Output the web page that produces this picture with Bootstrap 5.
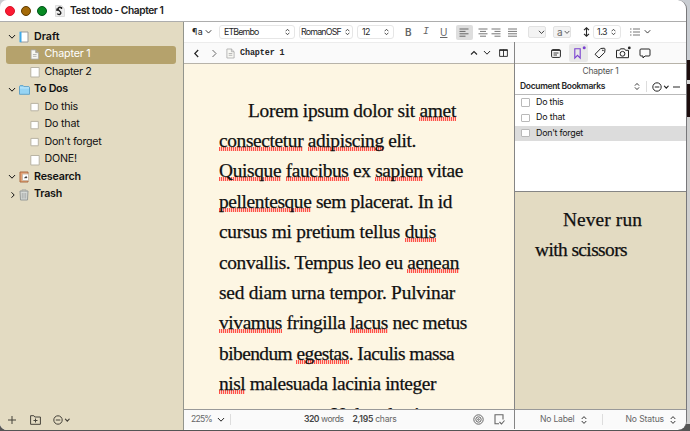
<!DOCTYPE html>
<html lang="en">
<head>
    <meta charset="UTF-8">
    <meta name="viewport" content="width=device-width, initial-scale=1.0">
    <title>Test todo - Chapter 1</title>
    <!-- Bootstrap CSS -->
    <link href="https://cdn.jsdelivr.net/npm/bootstrap@5.3.2/dist/css/bootstrap.min.css" rel="stylesheet">
    <style>
        body {
            width: 690px;
            height: 431px;
            background: linear-gradient(#c9cdd2 0 60px, #1b0c0c 60px 80px, #d9d9d9 80px 84px, #1b0c0c 84px 117px, #cfcfcf 117px 424px, #555 424px);
            font-family: Inter, "Liberation Sans", sans-serif;
            font-size: 10.7px;
            line-height: 1;
            color: #262626;
        }
        svg {
            display: block;
            flex: none;
            fill: none;
            stroke: currentColor;
            stroke-width: 1;
        }
        b { font-weight: 600; }
        [data-w] { display: inline-block; white-space: nowrap; }

        .app-window {
            width: 687px;
            height: 430px;
            background: #fff;
            border-right: 1px solid #77777a;
            border-radius: 7px 9px 9px 7px;
        }
        .title-bar { height: 22px; padding-left: 5px; border-bottom: 1px solid #adadad; color: #222; font-size: 10.2px; }
        .light { width: 10px; height: 10px; border-radius: 50%; margin-right: 6px; }
        .light-red { background: #fb1b33; border: 1px solid #d81428; }
        .light-amber { background: #a56a08; border: 1px solid #5e3b00; }
        .light-green { background: #078a22; border: 1px solid #03521a; }

        .binder { width: 184px; background: #e3dbc2; border-right: 1px solid #93958c; color: #111; }
        .binder-list { padding: 6.5px 7px 0 6px; }
        .binder-row { height: 17.5px; border-radius: 3px; }
        .binder-row.picked { background: #b5a26c; color: #fff; }
        .twisty { width: 13px; padding-left: 2px; }
        .item-icon { width: 15px; }
        .child { padding-left: 24px; }
        .child .item-icon { width: 14.5px; }
        .binder-foot { height: 20px; padding-left: 7px; gap: 14px; color: #45423a; }

        .format-bar { display: grid; grid-template-columns: 27px 80px 58px 48px 18px 17px 16px 22px 13px 16px 21px 25px 30px 10px 37px 1fr; align-items: center; height: 20px; padding-left: 8px; font-size: 8.8px; }
        .format-bar .letter { font-size: 10px; color: #666; }
        .picker { height: 14px; border: 1px solid #e6e6e6; border-radius: 3px; background: #fff; padding: 0 4px; }
        .align-box { width: 17px; height: 15px; background: #dedede; border-radius: 2px; }
        .swatch-box { width: 18px; height: 12px; background: #f3f3f3; border: 1px solid #e2e2e2; border-radius: 2px; }
        .head-bar { height: 22px; background: #fafafa; border-top: 1px solid #ececec; border-bottom: 1px solid #b7b3a9; }
        .doc-name { font-family: "Liberation Mono", monospace; font-weight: 700; font-size: 8.4px; }

        .editor { width: 331px; border-right: 1px solid #858585; }
        .page-area { height: 345px; background: #fdf6e3; padding: 31.6px 0 0 35px; }
        .prose { font-family: "Liberation Serif", serif; font-size: 19.4px; line-height: 30.4px; color: #101010; -webkit-text-stroke: .25px #101010; }
        .prose > div { height: 30.4px; white-space: nowrap; }
        .prose .first { padding-left: 29px; }
        .prose u {
            text-decoration: none;
            background: repeating-linear-gradient(90deg, #ff5148 0 1px, #fdcfc0 1px 2px) 0 100% / 100% 4px no-repeat;
        }
        .foot-bar { height: 20px; background: #fafafa; border-top: 1px solid #999; color: #666; font-size: 8.6px; }
        .foot-bar b { color: #444; }
        .rule { width: 1px; height: 11px; background: #ddd; }

        .inspector { width: 171px; }
        .tab-cell { width: 22.3px; height: 20px; }
        .tab-on { background: #e8e8e8; color: #7a40d0; height: 18px; width: 19px; margin: 0 1.6px; border-radius: 2px; }
        .marks-title { height: 15px; font-size: 8.5px; color: #555; }
        .marks-head { height: 16px; padding-left: 5px; border-bottom: 1px solid #b9b9b9; font-size: 8.5px; }
        .marks-list { height: 97px; border-bottom: 1px solid #858585; font-size: 8.9px; color: #111; }
        .marks-row { height: 15.3px; padding-left: 6px; gap: 6.5px; }
        .marks-row.picked { background: #dcdcdc; }
        .tick-box { width: 8.5px; height: 8.5px; background: #fff; border: 1px solid #b9b9b9; border-radius: 1px; }
        .notes { height: 217px; background: #e3dbc2; padding: 13px 0 0 20px; }
        .notes .first { padding-left: 28px; }
    </style>
</head>
<body class="overflow-hidden">
    <!-- Shared icons -->
    <svg class="d-none">
        <symbol id="down" viewBox="0 0 8 6"><path d="M1.2 1.3 4 4.2 6.8 1.3" stroke-linecap="round"/></symbol>
        <symbol id="updown" viewBox="0 0 6 10"><path d="M1 3.7 3 1.6 5 3.7M1 6.3 3 8.4 5 6.3" stroke-linecap="round" stroke-linejoin="round"/></symbol>
        <symbol id="more" viewBox="0 0 18 10"><circle cx="5" cy="5" r="4.2"/><path d="M2.8 5h4.5"/><path d="M12.4 4.2 14.3 6.1 16.2 4.2" stroke-linecap="round" stroke-width="1.2"/></symbol>
        <symbol id="sheet" viewBox="0 0 10 12"><path d="M1 1h5l3 3v7H1zM6 1v3h3M3 6h4M3 8h4" fill="#f8f8f4" stroke="#aaa" stroke-width=".9"/></symbol>
        <symbol id="blank" viewBox="0 0 10 12"><path d="M.8 1.5h8.4v9.5H.8z" fill="#fff" stroke="#b9b4a4"/></symbol>
        <symbol id="todo" viewBox="0 0 10 12"><path d="M.9 2.4h7.4v7.4H.9z" fill="#fff" stroke="#b9b4a4"/></symbol>
    </svg>

    <div class="app-window overflow-hidden d-flex flex-column">
        <div class="title-bar d-flex align-items-center">
            <span class="light light-red"></span>
            <span class="light light-amber"></span>
            <span class="light light-green"></span>
            <svg style="margin-left: 2px" width="10" height="12" viewBox="0 0 10 12"><path d="M.5.5h6L9.5 4v7.500H.5z" fill="#eee" stroke="#ddd"/><path d="M6.600 3C4.800 1.500 2.500 2.700 3.200 4.400S6.300 6.400 5.800 8.300 3 9.600 2.200 8.600M2 3.500v2.500M6.500 2v2" stroke="#222" stroke-width="1.400"/></svg>
            <b style="margin-left: 5px" data-w="93.500">Test todo - Chapter 1</b>
        </div>

        <div class="d-flex flex-grow-1">
            <!-- Binder -->
            <div class="binder d-flex flex-column justify-content-between">
                <div class="binder-list">
                    <div class="binder-row d-flex align-items-center">
                        <span class="twisty"><svg width="8" height="6"><use href="#down"/></svg></span>
                        <span class="item-icon"><svg width="10" height="12" viewBox="0 0 10 12"><path d="M1.500 1h7.500v10H1.500z" fill="#fff" stroke="#999"/><path d="M1.500.8v10.400" stroke="#3fa9e8" stroke-width="2"/></svg></span>
                        <b data-w="25.500">Draft</b>
                    </div>
                    <div class="binder-row picked child d-flex align-items-center">
                        <span class="item-icon"><svg width="9.500" height="11"><use href="#sheet"/></svg></span>
                        <span data-w="46">Chapter 1</span>
                    </div>
                    <div class="binder-row child d-flex align-items-center">
                        <span class="item-icon"><svg width="10" height="12"><use href="#blank"/></svg></span>
                        <span data-w="47">Chapter 2</span>
                    </div>
                    <div class="binder-row d-flex align-items-center">
                        <span class="twisty"><svg width="8" height="6"><use href="#down"/></svg></span>
                        <span class="item-icon"><svg width="11" height="10" viewBox="0 0 11 10"><path d="M.5 9.300V1.200l.6-.6h3l.8 1h5l.6.6v7.100z" fill="#96d4f4" stroke="#64a4c8"/><path d="M1 2.900h9" stroke="#c4eafc"/></svg></span>
                        <b data-w="34">To Dos</b>
                    </div>
                    <div class="binder-row child d-flex align-items-center">
                        <span class="item-icon"><svg width="10" height="12"><use href="#todo"/></svg></span>
                        <span data-w="33.500">Do this</span>
                    </div>
                    <div class="binder-row child d-flex align-items-center">
                        <span class="item-icon"><svg width="10" height="12"><use href="#todo"/></svg></span>
                        <span data-w="35">Do that</span>
                    </div>
                    <div class="binder-row child d-flex align-items-center">
                        <span class="item-icon"><svg width="10" height="12"><use href="#todo"/></svg></span>
                        <span data-w="57">Don't forget</span>
                    </div>
                    <div class="binder-row child d-flex align-items-center">
                        <span class="item-icon"><svg width="10" height="12"><use href="#blank"/></svg></span>
                        <span data-w="32.500">DONE!</span>
                    </div>
                    <div class="binder-row d-flex align-items-center">
                        <span class="twisty"><svg width="8" height="6"><use href="#down"/></svg></span>
                        <span class="item-icon"><svg width="11" height="12" viewBox="0 0 11 12"><path d="M1 1h8v10H1z" fill="#e6a173" stroke="#a96d45"/><path d="M3.500 3h6v6.500h-6z" fill="#fff" stroke="#cba"/><path d="M5.500 6.800h2.500L7.300 5.500z" fill="#222" stroke="#222" stroke-width=".6"/></svg></span>
                        <b data-w="47">Research</b>
                    </div>
                    <div class="binder-row d-flex align-items-center">
                        <span class="twisty ps-1"><svg width="6" height="8" viewBox="0 0 6 8"><path d="M1.500 1.300 4.200 4 1.500 6.700"/></svg></span>
                        <span class="item-icon"><svg width="10" height="12" viewBox="0 0 10 12"><path d="M1 2h8L8.500 11h-7z" fill="#d4d8d5" stroke="#959a98"/><path d="M3 2.500V.8h4v1.700M3.300 4v5.500M5 4v5.500M6.700 4v5.500" stroke="#a2a6a4" stroke-width=".8"/></svg></span>
                        <b data-w="28">Trash</b>
                    </div>
                </div>
                <div class="binder-foot d-flex align-items-center">
                    <svg width="10" height="10" viewBox="0 0 10 10"><path d="M5 1v8M1 5h8"/></svg>
                    <svg style="margin-left: -1px" width="11" height="10" viewBox="0 0 11 10"><path d="M.6 9.300V.7h3.200l1 1.300h5.600v7.300zM5.500 3.500v4M3.500 5.500h4"/></svg>
                    <svg style="margin-left: -2px" width="18" height="10"><use href="#more"/></svg>
                </div>
            </div>

            <div class="flex-grow-1">
                <!-- Format bar -->
                <div class="format-bar">
                    <div class="d-flex align-items-center"><span data-w="11">¶a</span><svg style="margin-left: 2px" width="7" height="6"><use href="#down"/></svg></div>
                    <div class="picker d-flex align-items-center justify-content-between me-1"><span data-w="34.500">ETBembo</span><svg width="5" height="8"><use href="#updown"/></svg></div>
                    <div class="picker d-flex align-items-center justify-content-between me-1" style="padding: 0 2px 0 1px"><span data-w="40">RomanOSF</span><svg width="5" height="8"><use href="#updown"/></svg></div>
                    <div class="picker d-flex align-items-center justify-content-between" style="width: 37px"><span data-w="8">12</span><svg width="5" height="8"><use href="#updown"/></svg></div>
                    <b class="letter">B</b>
                    <i class="letter font-monospace">I</i>
                    <span class="letter text-decoration-underline">U</span>
                    <div class="align-box d-flex align-items-center justify-content-center"><svg width="11" height="9" viewBox="0 0 11 9"><path d="M.5 1h9M.5 3.400h6M.5 5.800h9M.5 8.200h6" stroke="#666"/></svg></div>
                    <svg width="10" height="9" viewBox="0 0 10 9"><path d="M.5 1h9M2 3.400h6M.5 5.800h9M2 8.200h6" stroke="#777"/></svg>
                    <svg width="10" height="9" viewBox="0 0 10 9"><path d="M.5 1h9M3.500 3.400h6M.5 5.800h9M3.500 8.200h6" stroke="#777"/></svg>
                    <svg width="11" height="9" viewBox="0 0 11 9"><path d="M1 1h9M1 3.400h9M1 5.800h9M1 8.200h9" stroke="#777"/></svg>
                    <div class="swatch-box d-flex align-items-center justify-content-end"><svg width="7" height="5"><use href="#down"/></svg></div>
                    <div class="swatch-box d-flex align-items-center justify-content-between" style="padding-left: 3px"><span class="letter">a</span><svg width="6" height="5"><use href="#down"/></svg></div>
                    <svg width="7" height="10" viewBox="0 0 7 10"><path d="M3.500 1v8M1 3.200 3.500.8 6 3.200M1 6.800 3.500 9.200 6 6.800" stroke-width="1.100"/></svg>
                    <div class="picker d-flex align-items-center justify-content-between" style="width: 28px; padding: 0 4px 0 3px"><span data-w="10">1.3</span><svg width="5" height="8"><use href="#updown"/></svg></div>
                    <div class="d-flex align-items-center gap-1"><svg width="10" height="8" viewBox="0 0 10 8"><path d="M0 1h1.500M3 1h7M0 4h1.500M3 4h7M0 7h1.500M3 7h7" stroke="#777"/></svg><svg width="7" height="6"><use href="#down"/></svg></div>
                </div>

                <div class="d-flex">
                    <!-- Editor -->
                    <div class="editor">
                        <div class="head-bar d-flex align-items-center">
                            <svg style="margin-left: 9px" width="7" height="9" viewBox="0 0 7 9"><path d="M5.200 1 1.800 4.500 5.200 8" stroke-width="1.200"/></svg>
                            <svg style="margin-left: 11px" width="7" height="9" viewBox="0 0 7 9"><path d="M1.500 1 5 4.500 1.500 8" stroke="#666"/></svg>
                            <svg style="margin: 0 5px 0 8px" width="9" height="11"><use href="#sheet"/></svg>
                            <span class="doc-name" data-w="44.500">Chapter 1</span>
                            <svg class="ms-auto" width="8" height="6" viewBox="0 0 8 6"><path d="M1 4.500 4 1.500 7 4.500" stroke-width="1.100"/></svg>
                            <svg style="margin: 0 8px 0 5px" width="8" height="6"><use href="#down"/></svg>
                            <svg style="margin-right: 6px" width="9" height="8" viewBox="0 0 9 8"><path d="M.6.600h7.800v6.800H.6zM4.500.6v6.800M.6 1.500h7.800" stroke-width=".9"/></svg>
                        </div>
                        <div class="page-area overflow-hidden">
                            <div class="prose">
                                <div class="first"><span data-w="208">Lorem ipsum dolor sit <u>amet</u></span></div>
                                <div><span data-w="197"><u>consectetur</u> <u>adipiscing</u> elit.</span></div>
                                <div><span data-w="244"><u>Quisque</u> <u>faucibus</u> ex <u>sapien</u> vitae</span></div>
                                <div><span data-w="233"><u>pellentesque</u> sem placerat. In id</span></div>
                                <div><span data-w="217">cursus mi pretium tellus <u>duis</u></span></div>
                                <div><span data-w="240">convallis. Tempus leo eu <u>aenean</u></span></div>
                                <div><span data-w="236">sed diam urna tempor. Pulvinar</span></div>
                                <div><span data-w="248"><u>vivamus</u> fringilla <u>lacus</u> nec metus</span></div>
                                <div><span data-w="235">bibendum <u>egestas</u>. Iaculis massa</span></div>
                                <div><span data-w="217"><u>nisl</u> malesuada lacinia integer</span></div>
                                <div><span data-w="206">nunc posuere. Ut hendrerit</span></div>
                            </div>
                        </div>
                        <div class="foot-bar d-flex align-items-center">
                            <span style="margin-left: 7px" data-w="21">225%</span>
                            <svg style="margin: 0 5px 0 5px; color: #222" width="8" height="6"><use href="#down"/></svg>
                            <span class="rule"></span>
                            <span style="margin-left: 73px" data-w="39.500"><b>320</b> words</span>
                            <span style="margin-left: 9px" data-w="44"><b>2,195</b> chars</span>
                            <svg class="ms-auto" width="11" height="11" viewBox="0 0 11 11"><circle cx="5.500" cy="5.500" r="4.700"/><circle cx="5.500" cy="5.500" r="2.700"/><circle cx="5.500" cy="5.500" r=".8"/></svg>
                            <svg style="margin: 0 9px 0 10px" width="11" height="11" viewBox="0 0 11 11"><path d="M9 5.500V.8H1v9h4M5.500 8l2 2L10.500 6.500" stroke-width="1.100"/></svg>
                        </div>
                    </div>

                    <!-- Inspector -->
                    <div class="inspector">
                        <div class="head-bar d-flex align-items-center justify-content-center">
                            <span class="tab-cell d-flex align-items-center justify-content-center"><svg width="10" height="9" viewBox="0 0 10 9"><rect x=".6" y=".6" width="8.800" height="7.800" rx="1"/><path d="M.6 1.500h8.800M2.500 4h5M2.500 6h3.500" stroke-width=".9"/></svg></span>
                            <span class="tab-cell tab-on d-flex align-items-center justify-content-center"><svg width="16" height="14" viewBox="0 0 16 14"><path d="M4.800 2.800h5.400v9.300L7.500 9.300 4.800 12.100z" stroke-width="1.100"/><circle cx="14.200" cy="1.800" r="1.500" fill="currentColor" stroke="none"/></svg></span>
                            <span class="tab-cell d-flex align-items-center justify-content-center"><svg width="12" height="12" viewBox="0 0 12 12"><path d="M1 7.300 6.700 1.500l3.600-.3.700.7-.3 3.500L5 11z" stroke-linejoin="round"/><circle cx="8.900" cy="3.300" r=".4"/></svg></span>
                            <span class="tab-cell d-flex align-items-center justify-content-center"><svg width="16" height="14" viewBox="0 0 16 14"><path d="M1.500 4.300h3l1-1.500h4l1 1.500h3v7.400h-12z" stroke-linejoin="round"/><circle cx="7.500" cy="7.800" r="2.400"/><circle cx="14.300" cy="1.900" r="1.400" fill="currentColor" stroke="none"/></svg></span>
                            <span class="tab-cell d-flex align-items-center justify-content-center"><svg width="12" height="11" viewBox="0 0 12 11"><path d="M2 1h8q1 0 1 1v5q0 1-1 1H6L4 10V8H2Q1 8 1 7V2q0-1 1-1z"/></svg></span>
                        </div>
                        <div class="marks-title d-flex align-items-center justify-content-center"><span data-w="36">Chapter 1</span></div>
                        <div class="marks-head d-flex align-items-center">
                            <b data-w="85">Document Bookmarks</b>
                            <svg style="margin: 0 6px 0 29px" width="6" height="9"><use href="#updown"/></svg>
                            <span class="rule"></span>
                            <svg style="margin-left: 5px" width="18" height="10"><use href="#more"/></svg>
                            <svg style="margin-left: 3px" width="7" height="4" viewBox="0 0 7 4"><path d="M0 2h7"/></svg>
                        </div>
                        <div class="marks-list">
                            <div class="marks-row d-flex align-items-center"><span class="tick-box"></span><span data-w="27.500">Do this</span></div>
                            <div class="marks-row d-flex align-items-center"><span class="tick-box"></span><span data-w="29">Do that</span></div>
                            <div class="marks-row picked d-flex align-items-center"><span class="tick-box"></span><span data-w="47">Don't forget</span></div>
                        </div>
                        <div class="notes prose">
                            <div class="first"><span data-w="79">Never run</span></div>
                            <div><span data-w="92">with scissors</span></div>
                        </div>
                        <div class="foot-bar d-flex align-items-center">
                            <span style="margin-left: 25px" data-w="34.500">No Label</span>
                            <svg style="margin: 0 15px 0 6px; color: #333" width="6" height="10"><use href="#updown"/></svg>
                            <span class="rule"></span>
                            <span style="margin-left: 23px" data-w="38.500">No Status</span>
                            <svg style="margin-left: 6px; color: #333" width="6" height="10"><use href="#updown"/></svg>
                        </div>
                    </div>
                </div>
            </div>
        </div>
    </div>

    <!-- Bootstrap JS -->
    <script src="https://cdn.jsdelivr.net/npm/bootstrap@5.3.2/dist/js/bootstrap.bundle.min.js"></script>
    <script>
        // Track each label out or in to its set width
        document.querySelectorAll('[data-w]').forEach(function(el) {
            const extra = Number(el.dataset.w) - el.getBoundingClientRect().width;
            el.style.letterSpacing = (extra / el.textContent.length) + 'px';
        });
    </script>
</body>
</html>
